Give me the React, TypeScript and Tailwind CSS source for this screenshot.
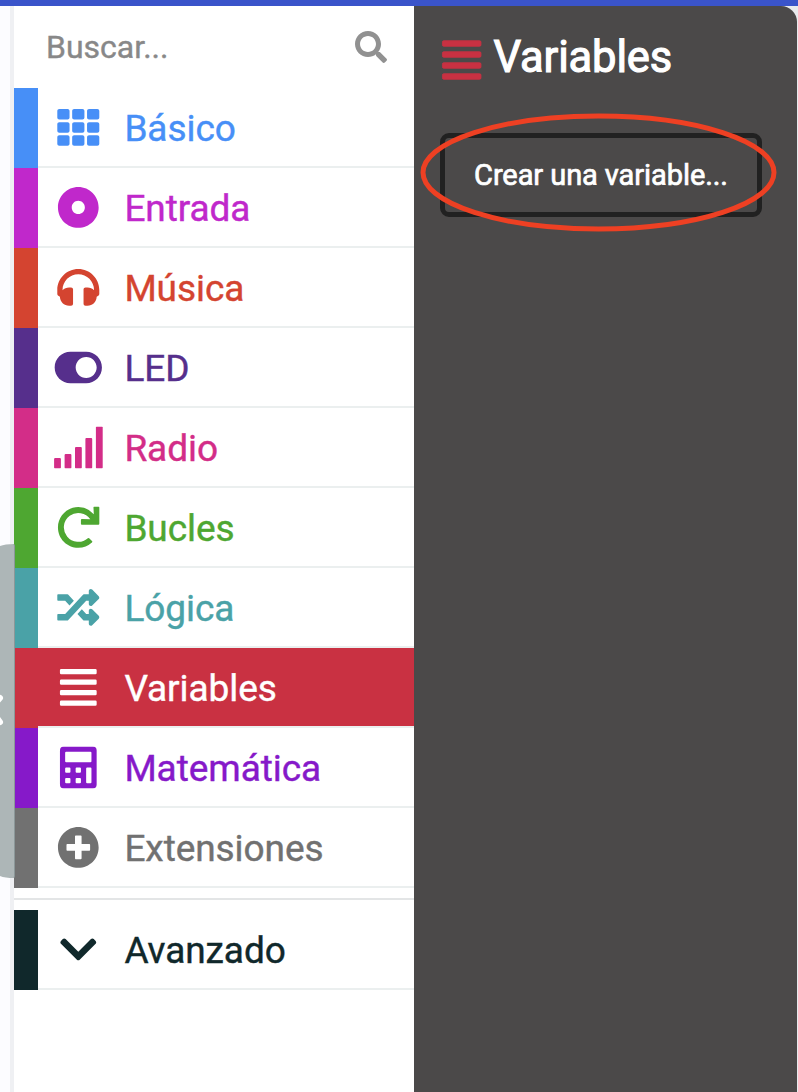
import type { ComponentType } from 'react';
import {
  FaAlignJustify,
  FaChevronDown,
  FaDotCircle,
  FaPlusCircle,
  FaRandom,
  FaRedo,
  FaSearch,
  FaTh,
  FaToggleOn,
} from 'react-icons/fa';

type IconProps = { className?: string };

function Headphones({ className }: IconProps) {
  return (
    <svg viewBox="0 0 512 512" fill="currentColor" className={className}>
      <path d="M256 32C114.52 32 0 146.497 0 288v49.714a24.001 24.001 0 0 0 12.319 20.966l19.702 10.977C32.908 430.748 82.698 480 144 480h24c13.255 0 24-10.745 24-24V280c0-13.255-10.745-24-24-24h-24c-31.342 0-59.671 12.879-80 33.627V288c0-105.869 86.131-192 192-192s192 86.131 192 192v1.627C427.671 268.879 399.342 256 368 256h-24c-13.255 0-24 10.745-24 24v176c0 13.255 10.745 24 24 24h24c61.302 0 111.092-49.252 111.979-110.344l19.702-10.977A24.001 24.001 0 0 0 512 337.714V288c0-141.48-114.496-256-256-256z" />
    </svg>
  );
}

function Signal({ className }: IconProps) {
  return (
    <svg viewBox="0 0 60 42" fill="currentColor" className={className}>
      <rect x="5.8" y="31.5" width="6.8" height="10.5" rx="1" />
      <rect x="16.3" y="27.5" width="6.8" height="14.5" rx="1" />
      <rect x="26.7" y="20.7" width="6.8" height="21.3" rx="1" />
      <rect x="37.1" y="11.7" width="6.8" height="30.3" rx="1" />
      <rect x="47.6" y="0" width="6.8" height="42" rx="1" />
    </svg>
  );
}

function Calculator({ className }: IconProps) {
  return (
    <svg viewBox="0 0 36.7 42" fill="currentColor" className={className}>
      <path
        fillRule="evenodd"
        d="M4 0h28.7a4 4 0 0 1 4 4v34a4 4 0 0 1-4 4H4a4 4 0 0 1-4-4V4a4 4 0 0 1 4-4zM6.2 5.3a1 1 0 0 0-1 1v8.5a1 1 0 0 0 1 1h24.3a1 1 0 0 0 1-1V6.3a1 1 0 0 0-1-1zM6.2 21a1 1 0 0 0-1 1v3.3a1 1 0 0 0 1 1h3.3a1 1 0 0 0 1-1V22a1 1 0 0 0-1-1zM16.7 21a1 1 0 0 0-1 1v3.3a1 1 0 0 0 1 1H20a1 1 0 0 0 1-1V22a1 1 0 0 0-1-1zM27.2 21a1 1 0 0 0-1 1v13.8a1 1 0 0 0 1 1h3.3a1 1 0 0 0 1-1V22a1 1 0 0 0-1-1zM6.2 31.5a1 1 0 0 0-1 1v3.3a1 1 0 0 0 1 1h3.3a1 1 0 0 0 1-1v-3.3a1 1 0 0 0-1-1zM16.7 31.5a1 1 0 0 0-1 1v3.3a1 1 0 0 0 1 1H20a1 1 0 0 0 1-1v-3.3a1 1 0 0 0-1-1z"
      />
    </svg>
  );
}

type Category = {
  label: string;
  Icon: ComponentType<IconProps>;
  text: string;
  bar: string;
  selected?: boolean;
};

const categories: Category[] = [
  { label: 'Básico', Icon: FaTh, text: 'text-[#478ff7]', bar: 'bg-[#478ff7]' },
  { label: 'Entrada', Icon: FaDotCircle, text: 'text-[#c028cb]', bar: 'bg-[#c028cb]' },
  { label: 'Música', Icon: Headphones, text: 'text-[#d44430]', bar: 'bg-[#d44430]' },
  { label: 'LED', Icon: FaToggleOn, text: 'text-[#562f8c]', bar: 'bg-[#562f8c]' },
  { label: 'Radio', Icon: Signal, text: 'text-[#d32d88]', bar: 'bg-[#d32d88]' },
  { label: 'Bucles', Icon: FaRedo, text: 'text-[#4ea731]', bar: 'bg-[#4ea731]' },
  { label: 'Lógica', Icon: FaRandom, text: 'text-[#4aa2a7]', bar: 'bg-[#4aa2a7]' },
  { label: 'Variables', Icon: FaAlignJustify, text: 'text-white', bar: 'bg-[#c93142]', selected: true },
  { label: 'Matemática', Icon: Calculator, text: 'text-[#8619c9]', bar: 'bg-[#8619c9]' },
  { label: 'Extensiones', Icon: FaPlusCircle, text: 'text-[#717171]', bar: 'bg-[#717171]' },
];

const advanced: Category = {
  label: 'Avanzado',
  Icon: FaChevronDown,
  text: 'text-[#10282b]',
  bar: 'bg-[#10282b]',
};

function CategoryRow({ label, Icon, text, bar, selected }: Category) {
  return (
    <li className={`flex h-20 ${bar}`}>
      <div
        className={`ml-6 flex flex-1 items-center border-b-2 border-[#ebefef] pl-[10.4px] ${text} ${
          selected ? 'bg-[#c93142]' : 'bg-white'
        }`}
      >
        <Icon className="h-[42px] w-[60px] shrink-0 translate-x-[0.3px] translate-y-[0.4px]" />
        <span className="ml-4 pt-[3px] text-[37px] leading-[44px] tracking-[-0.07px] [-webkit-text-stroke:0.4px_currentColor]">
          {label}
        </span>
      </div>
    </li>
  );
}

export default function App() {
  return (
    <div className="relative flex h-[1092px] w-[798px] flex-col overflow-hidden bg-white font-['Roboto',sans-serif]">
      <header className="h-[6px] shrink-0 bg-[#3a54ca]" />
      <div className="flex min-h-0 flex-1">
        <div className="w-[14px] shrink-0 border-r-4 border-[#eff0f3] bg-[#fcfcff]" />
        <nav className="flex w-[400px] shrink-0 flex-col">
          <div className="flex h-[82px] items-center justify-between pr-[27px] pl-[32px]">
            <span className="text-[32px] leading-[38px] text-[#888888] [-webkit-text-stroke:0.4px_currentColor]">
              Buscar...
            </span>
            <FaSearch className="h-8 w-8 text-[#919191]" />
          </div>
          <ul>
            {categories.map((c) => (
              <CategoryRow key={c.label} {...c} />
            ))}
          </ul>
          <div className="mt-[10px] mb-[10px] h-[2px] bg-[#e3e5e6]" />
          <ul>
            <CategoryRow {...advanced} />
          </ul>
        </nav>
        <main className="flex-1 bg-[#e9ebee]">
          <section className="mr-[1.5px] h-full rounded-tr-[16px] bg-[#4b4949] pl-[26px] text-white">
            <div className="flex h-[127px] items-start pt-[25px]">
              <FaAlignJustify className="mt-[7px] h-11 w-11 shrink-0 -translate-x-[0.3px] stroke-current stroke-[10px] text-[#c93142]" />
              <h1 className="ml-[9.5px] text-[43.5px] leading-[53px] tracking-[-0.15px] [-webkit-text-stroke:1.1px_currentColor]">
                Variables
              </h1>
            </div>
            <button className="flex h-[84px] w-[322px] items-center justify-center rounded-[9px] border-[5px] border-[#212121] pt-[2px] text-[29px] tracking-[-0.08px] [-webkit-text-stroke:0.7px_currentColor]">
              Crear una variable...
            </button>
          </section>
        </main>
      </div>

      <div className="absolute top-[544px] left-[-40px] h-[334px] w-[55px] rounded-r-[2px] border-r border-[#8b9798] bg-[#adb6b7]" />
      <svg className="absolute top-[540px] left-0 h-[342px] w-[15px]" viewBox="0 0 15 342" fill="none">
        <path d="M0 4h14Q5 4 0 6zM0 338h14Q5 338 0 336z" fill="#fcfcff" />
        <path d="M-10 169 L0 158 M-10 169 L0 182" stroke="white" strokeWidth="6" strokeLinecap="round" />
      </svg>
      <svg className="absolute top-[110px] left-[416px] h-[126px] w-[366px]" viewBox="0 0 366 126" fill="none">
        <ellipse cx="182.5" cy="62.5" rx="175.5" ry="56.5" stroke="#ee4023" strokeWidth="5" />
      </svg>
    </div>
  );
}
